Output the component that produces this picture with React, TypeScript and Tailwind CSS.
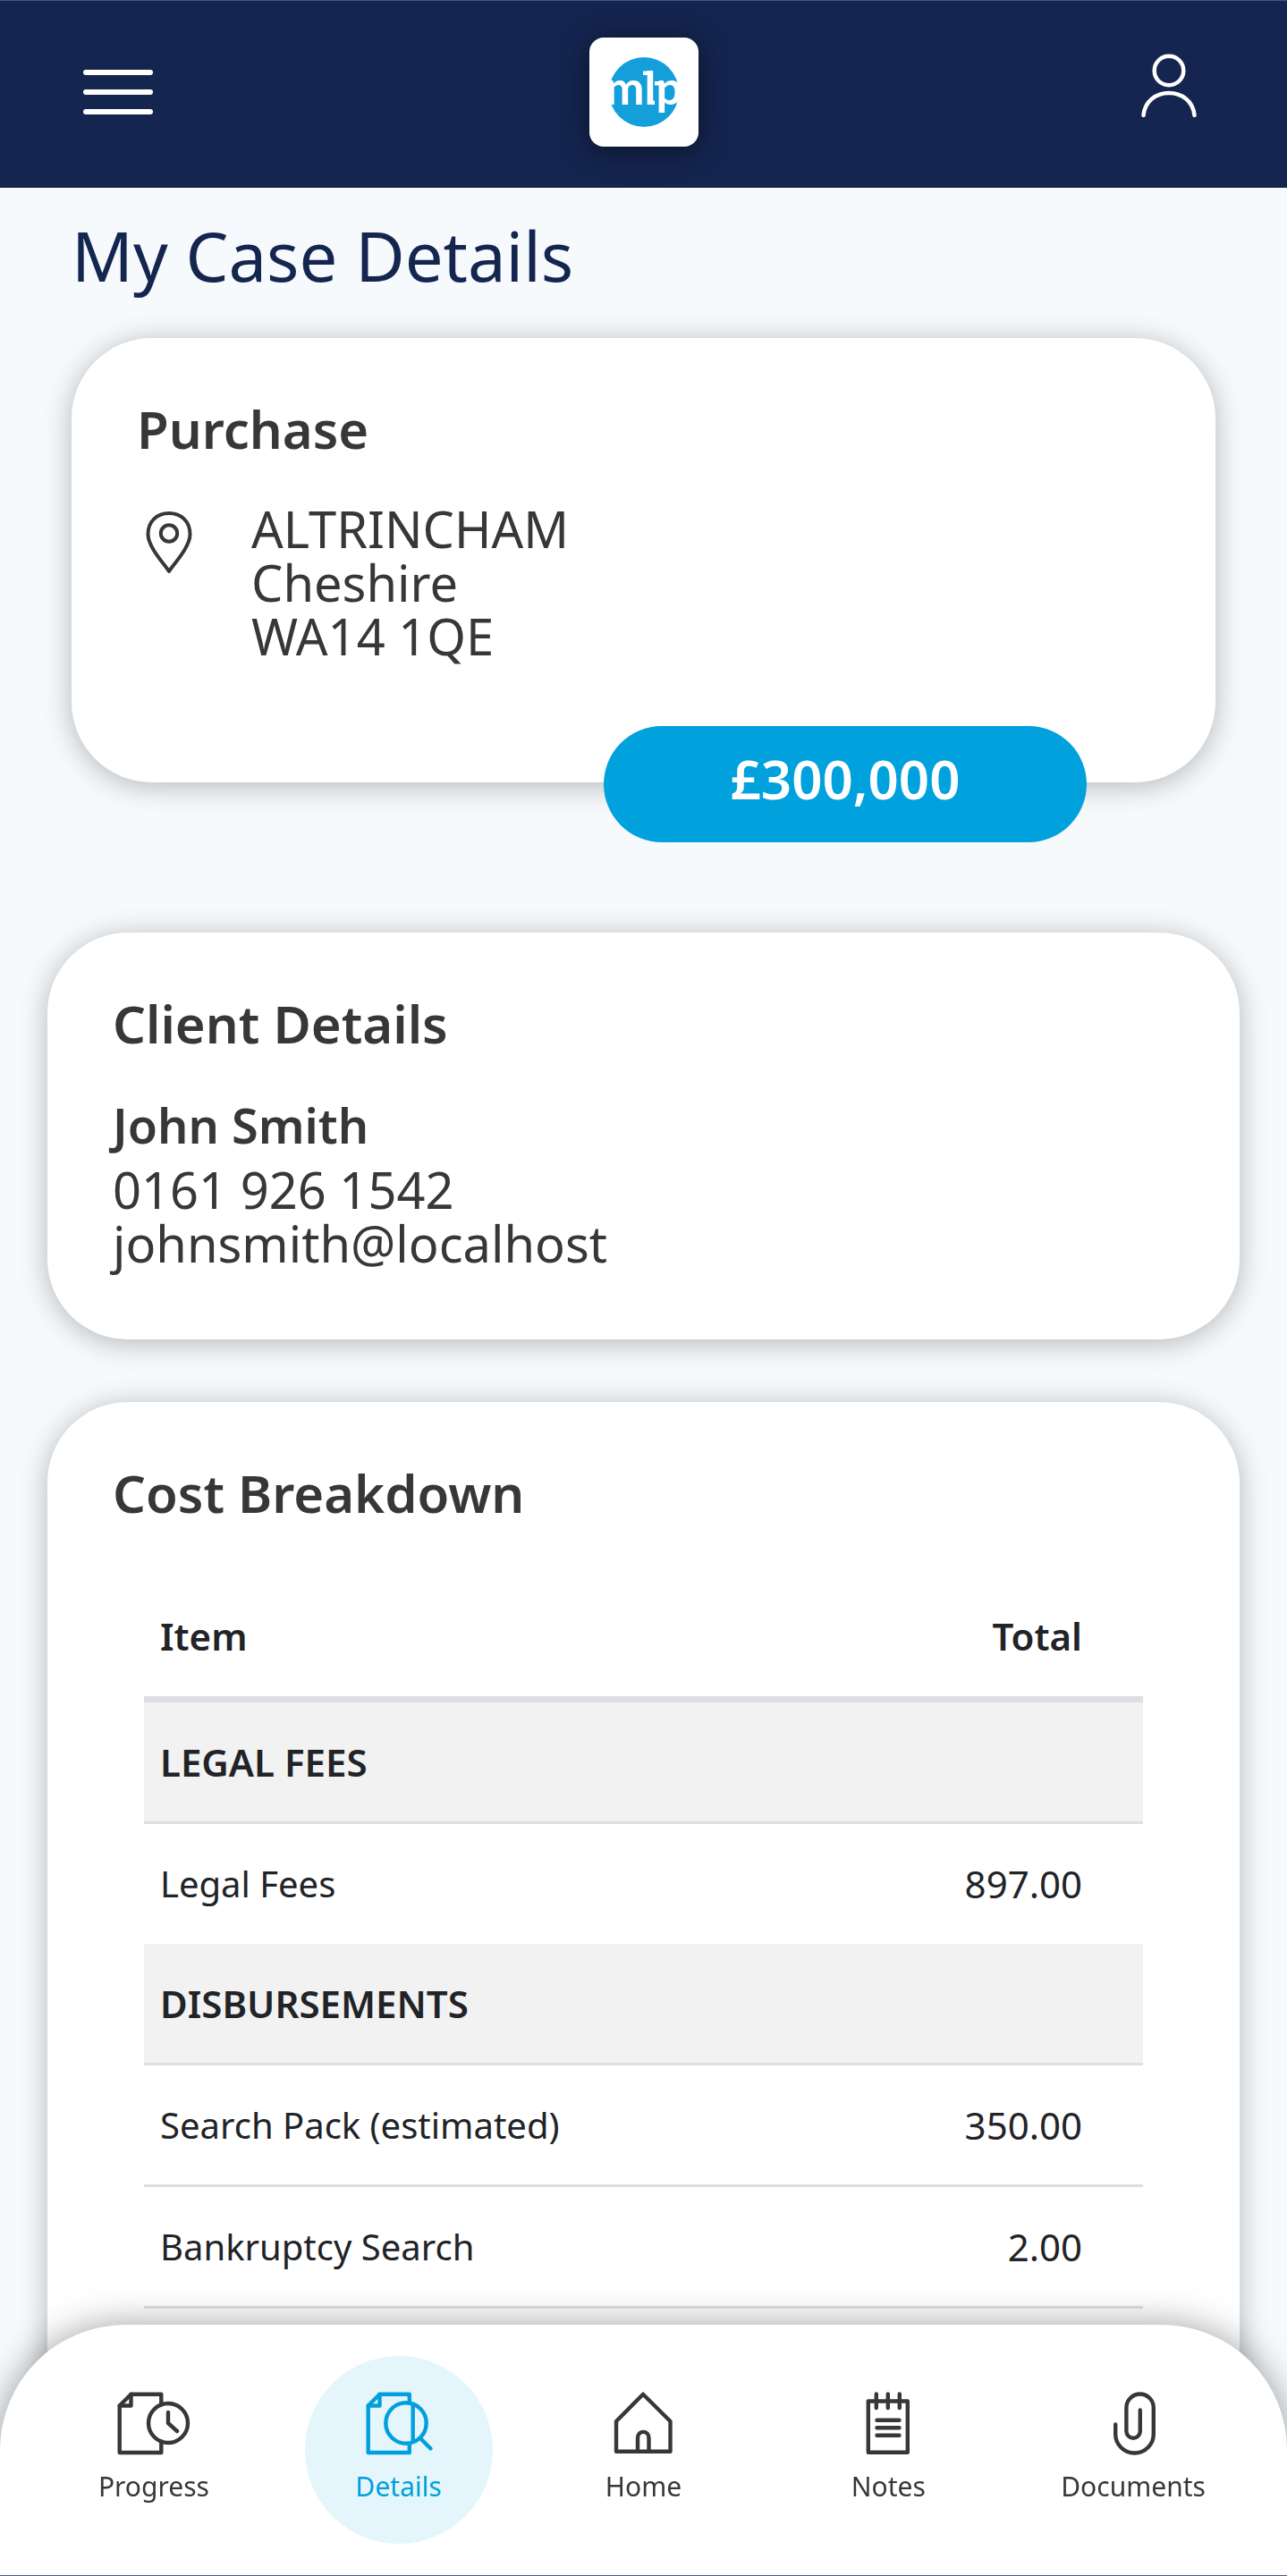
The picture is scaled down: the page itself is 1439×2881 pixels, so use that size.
/**
 * Case details screen: purchase summary, client details and cost breakdown.
 */

import type { ReactNode } from 'react';

interface CostRow {
  item: string;
  total?: string;
  divider?: boolean;
}

interface NavItem {
  label: string;
  icon: ReactNode;
  active?: boolean;
}

const costRows: CostRow[] = [
  { item: 'LEGAL FEES', divider: true },
  { item: 'Legal Fees', total: '897.00' },
  { item: 'DISBURSEMENTS', divider: true },
  { item: 'Search Pack (estimated)', total: '350.00', divider: true },
  { item: 'Bankruptcy Search', total: '2.00', divider: true },
];

const navItems: NavItem[] = [
  {
    label: 'Progress',
    icon: (
      <>
        <path d="M58.3 14.5V2.7H24.5L11.7 15.5V68H58.3V55.5" />
        <path d="M24.5 2.7V15.5H11.7" />
        <circle cx="66" cy="35" r="22" />
        <path d="M66 23V35L76 44" />
      </>
    ),
  },
  {
    label: 'Details',
    active: true,
    icon: (
      <>
        <path d="M61.8 12V2.7H28.5L15.7 15.5V68H61.8V58" />
        <path d="M28.5 2.7V15.5H15.7" />
        <circle cx="58" cy="35" r="22.7" />
        <path d="M65.7 15V55" />
        <path d="M74 52L85.5 63.5" />
      </>
    ),
  },
  {
    label: 'Home',
    icon: (
      <>
        <path d="M50 2.7L20 33V66.8H80.5V33Z" />
        <path d="M44 66V52C44 42.5 56.5 42.5 56.5 52V66" />
      </>
    ),
  },
  {
    label: 'Notes',
    icon: (
      <>
        <path d="M27.8 10.5H71.8V67.8H27.8Z" />
        <path d="M36.8 2.5V18M49.8 2.5V18M62.8 2.5V18" />
        <path d="M37.5 31.7H62.5M37.5 40.2H62.5M37.5 48.8H62.5" />
      </>
    ),
  },
  {
    label: 'Documents',
    icon: (
      <path d="M30.2 36.5V47.2A21.3 21.3 0 0 0 72.8 47.2V17.7A15.2 15.2 0 0 0 42.4 17.7V44A7.7 7.7 0 0 0 57.8 44V20.5" />
    ),
  },
];

function Header() {
  return (
    <header className="flex h-[210px] items-center justify-between border-t border-[#3f5785] bg-[#14254f] px-[93px] pb-[5px]">
      <button type="button" aria-label="Menu" className="flex w-[78px] flex-col gap-4">
        <span className="h-[6px] w-full rounded-sm bg-white" />
        <span className="h-[6px] w-full rounded-sm bg-white" />
        <span className="h-[6px] w-full rounded-sm bg-white" />
      </button>

      <div className="size-[122px] rounded-2xl bg-white shadow-[0_4px_32px_rgba(0,0,0,0.5)]">
        <svg viewBox="0 0 122 122" className="size-[122px]" role="img" aria-label="mlp" fill="white">
          <circle cx="61" cy="61" r="39" fill="#149fdb" />
          <text
            x="104"
            y="75"
            textAnchor="end"
            fontSize="52"
            className="font-['Lato',sans-serif] font-bold"
          >
            mlp
          </text>
          {/* Slab serifs */}
          <rect x="60" y="37.5" width="6" height="4.5" />
          <rect x="66" y="70.5" width="7" height="4.5" />
          <rect x="73" y="49" width="6" height="4.5" />
        </svg>
      </div>

      <button type="button" aria-label="My account" className="flex w-[78px] justify-end">
        <svg
          viewBox="0 -6 70 88"
          className="h-[88px] w-[70px]"
          fill="none"
          stroke="white"
          strokeWidth="4.5"
          strokeLinecap="round"
        >
          <circle cx="31" cy="14" r="16.3" />
          <path d="M2.5 64C5.5 30.7 56.5 30.7 59.5 64" />
        </svg>
      </button>
    </header>
  );
}

function Card({ title, className, children }: { title: string; className: string; children: ReactNode }) {
  return (
    <section
      className={`relative rounded-[90px] bg-white px-[73px] pt-[70px] shadow-[0_4px_32px_rgba(0,0,0,0.27)] ${className}`}
    >
      <h2 className="text-[58px] leading-[64px] font-semibold">{title}</h2>
      {children}
    </section>
  );
}

function CostTable() {
  return (
    <div className="mt-[60px] px-[35px]">
      <table className="w-full border-separate border-spacing-0 text-[42px] leading-[56px] text-[#212327]">
        <thead>
          <tr className="h-[142px]">
            <th className="border-b-[7px] border-[#dce0e4] pl-[18px] text-left font-semibold">Item</th>
            <th className="border-b-[7px] border-[#dce0e4] pr-[68px] text-right font-semibold">Total</th>
          </tr>
        </thead>
        <tbody>
          {costRows.map((row) => {
            const border = row.divider ? 'h-[136px] border-b-[3px] border-[#dedfe5]' : 'h-[134px]';
            return row.total ? (
              <tr key={row.item}>
                <td className={`pl-[18px] text-[40px] ${border}`}>{row.item}</td>
                <td className={`pr-[68px] text-right ${border}`}>{row.total}</td>
              </tr>
            ) : (
              <tr key={row.item} className="bg-[#f2f2f2]">
                <th colSpan={2} className={`pl-[18px] text-left font-semibold ${border}`}>
                  {row.item}
                </th>
              </tr>
            );
          })}
        </tbody>
      </table>
    </div>
  );
}

function BottomNav() {
  return (
    <nav className="fixed inset-x-0 bottom-0 grid h-[281px] grid-cols-5 justify-items-center rounded-t-[140px] border-b border-[#4a5d88] bg-white px-[35px] pt-[35px] shadow-[0_0_40px_rgba(0,0,0,0.38)]">
      {navItems.map((item) => (
        <a
          key={item.label}
          href={`#${item.label.toLowerCase()}`}
          aria-current={item.active ? 'page' : undefined}
          className={`flex size-[210px] flex-col items-center rounded-full pt-10 text-[30px] leading-[40px] ${
            item.active ? 'bg-[#e4f5fc] text-[#00a0dc]' : 'text-[#373737]'
          }`}
        >
          <svg
            viewBox="0 0 100 72"
            className="h-[72px] w-[100px]"
            fill="none"
            stroke="currentColor"
            strokeWidth="4.4"
            strokeLinecap="round"
            strokeLinejoin="round"
          >
            {item.icon}
          </svg>
          <span className="mt-[14px]">{item.label}</span>
        </a>
      ))}
    </nav>
  );
}

export default function App() {
  return (
    <div className="flex min-h-screen flex-col bg-[#f6fafd] font-['Noto_Sans',sans-serif] text-[#373737]">
      <Header />

      <main className="flex flex-1 flex-col px-[53px] pt-9">
        <h1 className="px-[27px] text-[76px] leading-[80px] text-[#14254f]">My Case Details</h1>

        <Card title="Purchase" className="mx-[27px] mt-[52px] pb-[134px]">
          <div className="mt-[49px] flex items-start gap-[58px]">
            <svg
              viewBox="0 0 70 72"
              className="mt-[10px] h-[72px] w-[70px]"
              fill="none"
              stroke="currentColor"
              strokeWidth="4"
              strokeLinejoin="round"
            >
              <path d="M36 68C31 60 12.5 41 12.5 26.5C12.5 12 22.5 3 36 3S59.5 12 59.5 26.5C59.5 41 41 60 36 68Z" />
              <circle cx="36" cy="25.5" r="9.2" />
            </svg>
            <address className="text-[56px] leading-[60px] not-italic">
              ALTRINCHAM
              <br />
              Cheshire
              <br />
              WA14 1QE
            </address>
          </div>
          {/* Price pill overlaps the bottom edge of the card */}
          <p className="absolute right-[144px] -bottom-[67px] flex h-[130px] w-[540px] items-center justify-center rounded-full bg-[#00a1dd] pb-3 text-[60px] leading-[64px] font-semibold text-white">
            £300,000
          </p>
        </Card>

        <Card title="Client Details" className="mt-[168px] pb-[78px]">
          <p className="mt-[51px] text-[54px] leading-[60px] font-semibold">John Smith</p>
          <p className="mt-3 text-[56px] leading-[60px]">0161 926 1542</p>
          <p className="text-[56px] leading-[60px]">johnsmith@localhost</p>
        </Card>

        <Card title="Cost Breakdown" className="mt-[70px] flex-1 rounded-b-none">
          <CostTable />
        </Card>
      </main>

      <BottomNav />
    </div>
  );
}
